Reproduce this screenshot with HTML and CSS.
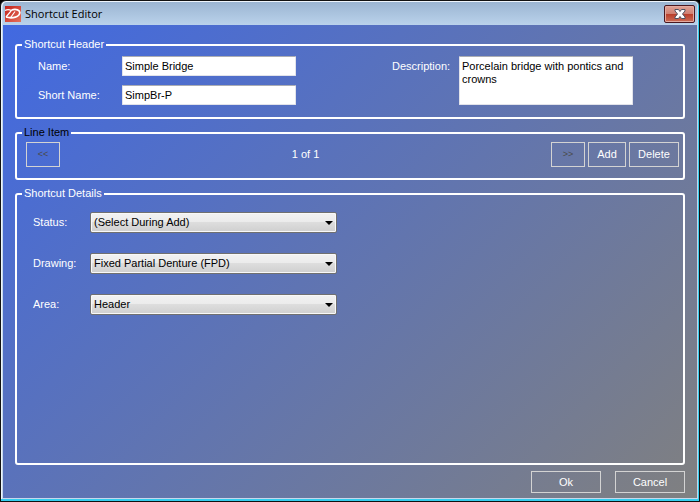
FILE: index.html
```
<!DOCTYPE html>
<html lang="en">
<head>
    <meta charset="UTF-8">
    <meta name="viewport" content="width=device-width, initial-scale=1.0">
    <title>Shortcut Editor</title>
    <link rel="stylesheet" href="styles.css">
</head>
<body>

<div class="window">
    <!-- Title Bar -->
    <header class="title-bar">
        <svg class="app-icon" width="16" height="16" viewBox="0 0 16 16" aria-hidden="true">
            <defs>
                <linearGradient id="icon-red" x1="0" y1="0" x2="1" y2="1">
                    <stop offset="0" stop-color="#c4201a"/>
                    <stop offset="1" stop-color="#e4705c"/>
                </linearGradient>
            </defs>
            <rect width="16" height="16" fill="url(#icon-red)"/>
            <path d="M0 4.500C2 3.200 4.500 3.400 6.500 4.500L1 11" fill="none" stroke="#fff" stroke-width="1.200"/>
            <path d="M6.500 4C11 2.500 15.200 4 14.800 7C14.400 10.500 8 13 1 11" fill="none" stroke="#fff" stroke-width="1.800"/>
            <path d="M10 5.500L6 11" stroke="#fff" stroke-width="1.200"/>
        </svg>
        <h1>Shortcut Editor</h1>
        <button type="button" class="close-btn" aria-label="Close">
            <svg width="12" height="10" viewBox="0 0 12 10" aria-hidden="true">
                <path d="M1 .5h3.500L6 2.500L7.500 .5H11V2L8.500 5L11 8v1.500H7.500L6 7.500L4.500 9.500H1V8l2.500-3L1 2z" fill="#fff" stroke="#4d5262"/>
            </svg>
        </button>
    </header>

    <form class="content">
        <!-- Shortcut Header -->
        <fieldset class="group">
            <legend>Shortcut Header</legend>
            <div class="header-fields">
                <div class="names">
                    <label for="name">Name:</label>
                    <input type="text" id="name" value="Simple Bridge">
                    <label for="short-name">Short Name:</label>
                    <input type="text" id="short-name" value="SimpBr-P">
                </div>
                <div class="description">
                    <label for="description">Description:</label>
                    <textarea id="description">Porcelain bridge with pontics and crowns</textarea>
                </div>
            </div>
        </fieldset>

        <!-- Line Item -->
        <fieldset class="group">
            <legend class="dark">Line Item</legend>
            <div class="pager">
                <button type="button" class="btn nav-btn" disabled>&lt;&lt;</button>
                <span>1 of 1</span>
                <div class="pager-right">
                    <button type="button" class="btn nav-btn" disabled>&gt;&gt;</button>
                    <button type="button" class="btn add-btn">Add</button>
                    <button type="button" class="btn delete-btn">Delete</button>
                </div>
            </div>
        </fieldset>

        <!-- Shortcut Details -->
        <fieldset class="group details-group">
            <legend>Shortcut Details</legend>
            <div class="details">
                <label for="status">Status:</label>
                <div class="select">
                    <select id="status"><option>(Select During Add)</option></select>
                </div>
                <label for="drawing">Drawing:</label>
                <div class="select">
                    <select id="drawing"><option>Fixed Partial Denture (FPD)</option></select>
                </div>
                <label for="area">Area:</label>
                <div class="select">
                    <select id="area"><option>Header</option></select>
                </div>
            </div>
        </fieldset>

        <div class="actions">
            <button type="button" class="btn">Ok</button>
            <button type="button" class="btn">Cancel</button>
        </div>
    </form>
</div>

</body>
</html>
```

FILE: styles.css
```
* {
    box-sizing: border-box;
}

body {
    margin: 0;
    background-color: #000;
    font-family: "Liberation Sans", Arial, sans-serif;
    font-size: 11px;
    line-height: 13px;
    color: #fff;
}

button, input, textarea, select {
    font: inherit;
    margin: 0;
}

/* Window frame */
.window {
    display: flex;
    flex-direction: column;
    min-height: 100vh;
    border: 1px solid #111;
    border-radius: 6px 6px 0 0;
    background-color: #c5d8ec;
    box-shadow: inset -1px -2px 0 #35cdee, inset 1px 1px 0 #eef5fc;
    padding: 1px 2px 3px 2px;
}

.title-bar {
    display: flex;
    align-items: center;
    height: 23px;
    padding: 0 2px;
    border-radius: 4px 4px 0 0;
    background: linear-gradient(#9bb5d2, #bad2eb);
}

.app-icon {
    margin-right: 4px;
}

.title-bar h1 {
    flex: 1;
    margin: 0;
    font-family: "Open Sans", sans-serif;
    font-size: 11px;
    font-weight: normal;
    color: #000;
}

.close-btn {
    display: flex;
    align-items: center;
    justify-content: center;
    width: 31px;
    height: 18px;
    padding: 0;
    border: 1px solid #4a1820;
    border-radius: 2px;
    background: linear-gradient(#e0a397, #d08072 48%, #b93d29 50%, #cc6e58);
    box-shadow: inset 0 0 0 1px #e3aaa0;
}

.content {
    flex: 1;
    display: flex;
    flex-direction: column;
    padding: 13px 12px 5px;
    background: linear-gradient(135deg, #4169e1, #808080);
}

/* Groups */
.group {
    min-width: 0;
    margin: 0 0 7px;
    padding: 0;
    border: 2px solid #fff;
    border-radius: 3px;
}

.group legend {
    margin-left: 5px;
    padding: 0 2px;
}

.group .dark {
    color: #000;
}

.header-fields {
    display: flex;
    justify-content: space-between;
    padding: 5px 50px 12px 21px;
}

.names {
    display: grid;
    grid-template-columns: 84px 174px;
    row-gap: 9px;
    align-items: center;
}

.description {
    display: flex;
}

.description label {
    width: 67px;
    padding-top: 4px;
}

input, textarea {
    width: 174px;
    height: 20px;
    padding: 2px;
    border: 1px solid #e2e3ea;
    border-top-color: #abadb3;
    border-radius: 1px;
    background-color: #fff;
    color: #000;
}

textarea {
    display: block;
    height: 49px;
    padding-top: 3px;
    resize: none;
    overflow: hidden;
}

/* Buttons */
.btn {
    width: 70px;
    height: 22px;
    padding: 0;
    border: 1px solid #d3d3d3;
    background-color: transparent;
    color: #fff;
}

.pager {
    display: flex;
    align-items: center;
    justify-content: space-between;
    padding: 3px 4px 11px 9px;
}

.pager-right {
    display: flex;
    gap: 3px;
}

.pager .btn {
    height: 25px;
}

.pager .nav-btn {
    width: 34px;
    font-size: 9px;
    color: #4a4a4a;
}

.pager .add-btn {
    width: 38px;
}

.pager .delete-btn {
    width: 50px;
}

/* Details */
.details-group {
    flex: 1;
    margin-bottom: 6px;
}

.details {
    display: grid;
    grid-template-columns: 57px 247px;
    row-gap: 20px;
    align-items: center;
    padding: 12px 16px;
}

.select {
    position: relative;
}

.select::after {
    content: '';
    position: absolute;
    top: 9px;
    right: 4px;
    border: 4px solid transparent;
    border-top-color: #000;
    border-bottom: 0;
    pointer-events: none;
}

select {
    appearance: none;
    display: block;
    width: 100%;
    height: 21px;
    padding: 0 16px 0 3px;
    border: 1px solid #707070;
    border-radius: 2px;
    background: linear-gradient(#f2f2f2, #ebebeb 48%, #dddddd 50%, #cfcfcf);
    box-shadow: inset 0 0 0 1px #f8f8f8;
    color: #000;
}

.actions {
    display: flex;
    justify-content: flex-end;
    gap: 14px;
}
```
